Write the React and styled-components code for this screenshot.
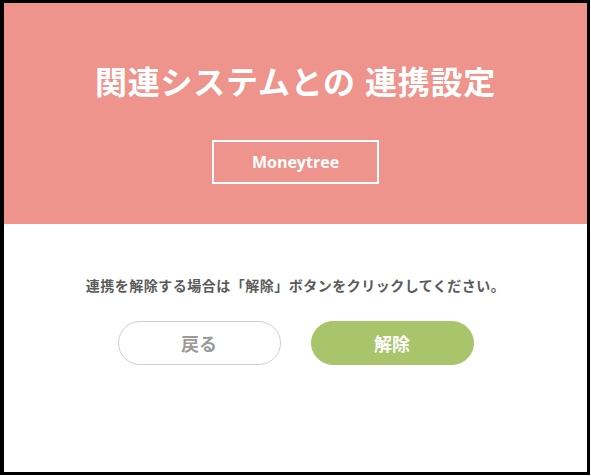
import React from "react";
import styled, { createGlobalStyle } from "styled-components";

const GlobalStyle = createGlobalStyle`
  html, body {
    margin: 0;
    padding: 0;
    background: #ffffff;
  }
  body {
    font-family: "Open Sans", "Noto Sans CJK JP", sans-serif;
  }
`;

const Frame = styled.div`
  box-sizing: border-box;
  width: 590px;
  height: 475px;
  border-style: solid;
  border-color: #000000;
  border-width: 3px 3px 3px 4px;
  background: #ffffff;
  display: flex;
  flex-direction: column;
`;

const Header = styled.header`
  background: #ee948c;
  height: 221px;
  box-sizing: border-box;
  padding-top: 55px;
  display: flex;
  flex-direction: column;
  align-items: center;
`;

const Title = styled.h1`
  margin: 0;
  color: #ffffff;
  font-family: "Open Sans", "Noto Sans CJK JP", sans-serif;
  font-size: 32px;
  font-weight: 700;
  line-height: 48px;
  letter-spacing: 0.75px;
`;

const ServiceBox = styled.div`
  margin-top: 34px;
  box-sizing: border-box;
  width: 167px;
  height: 44px;
  border: 2px solid #ffffff;
  display: flex;
  align-items: center;
  justify-content: center;
  color: #ffffff;
  font-size: 16px;
  font-weight: 700;
`;

const Body = styled.section`
  display: flex;
  flex-direction: column;
  align-items: center;
  padding-top: 50px;
`;

const Message = styled.p`
  margin: 0;
  color: #5a5a5a;
  font-size: 14px;
  font-weight: 700;
  line-height: 24px;
  letter-spacing: 0.5px;
`;

const ButtonRow = styled.div`
  display: flex;
  gap: 30px;
  margin-top: 23px;
`;

const Button = styled.button`
  box-sizing: border-box;
  width: 163px;
  height: 44px;
  border-radius: 22px;
  font-family: "Open Sans", "Noto Sans CJK JP", sans-serif;
  font-size: 18px;
  font-weight: 700;
  cursor: pointer;
  border: 1px solid ${(p) => (p.$primary ? "#a9c56b" : "#d0d0d0")};
  background: ${(p) => (p.$primary ? "#a9c56b" : "#ffffff")};
  color: ${(p) => (p.$primary ? "#ffffff" : "#9a9a9a")};
`;

const App = () => {
  return (
    <>
      <GlobalStyle />
      <Frame>
        <Header>
          <Title>関連システムとの 連携設定</Title>
          <ServiceBox>Moneytree</ServiceBox>
        </Header>
        <Body>
          <Message>
            連携を解除する場合は「解除」ボタンをクリックしてください。
          </Message>
          <ButtonRow>
            <Button>戻る</Button>
            <Button $primary>解除</Button>
          </ButtonRow>
        </Body>
      </Frame>
    </>
  );
};

export default App;
